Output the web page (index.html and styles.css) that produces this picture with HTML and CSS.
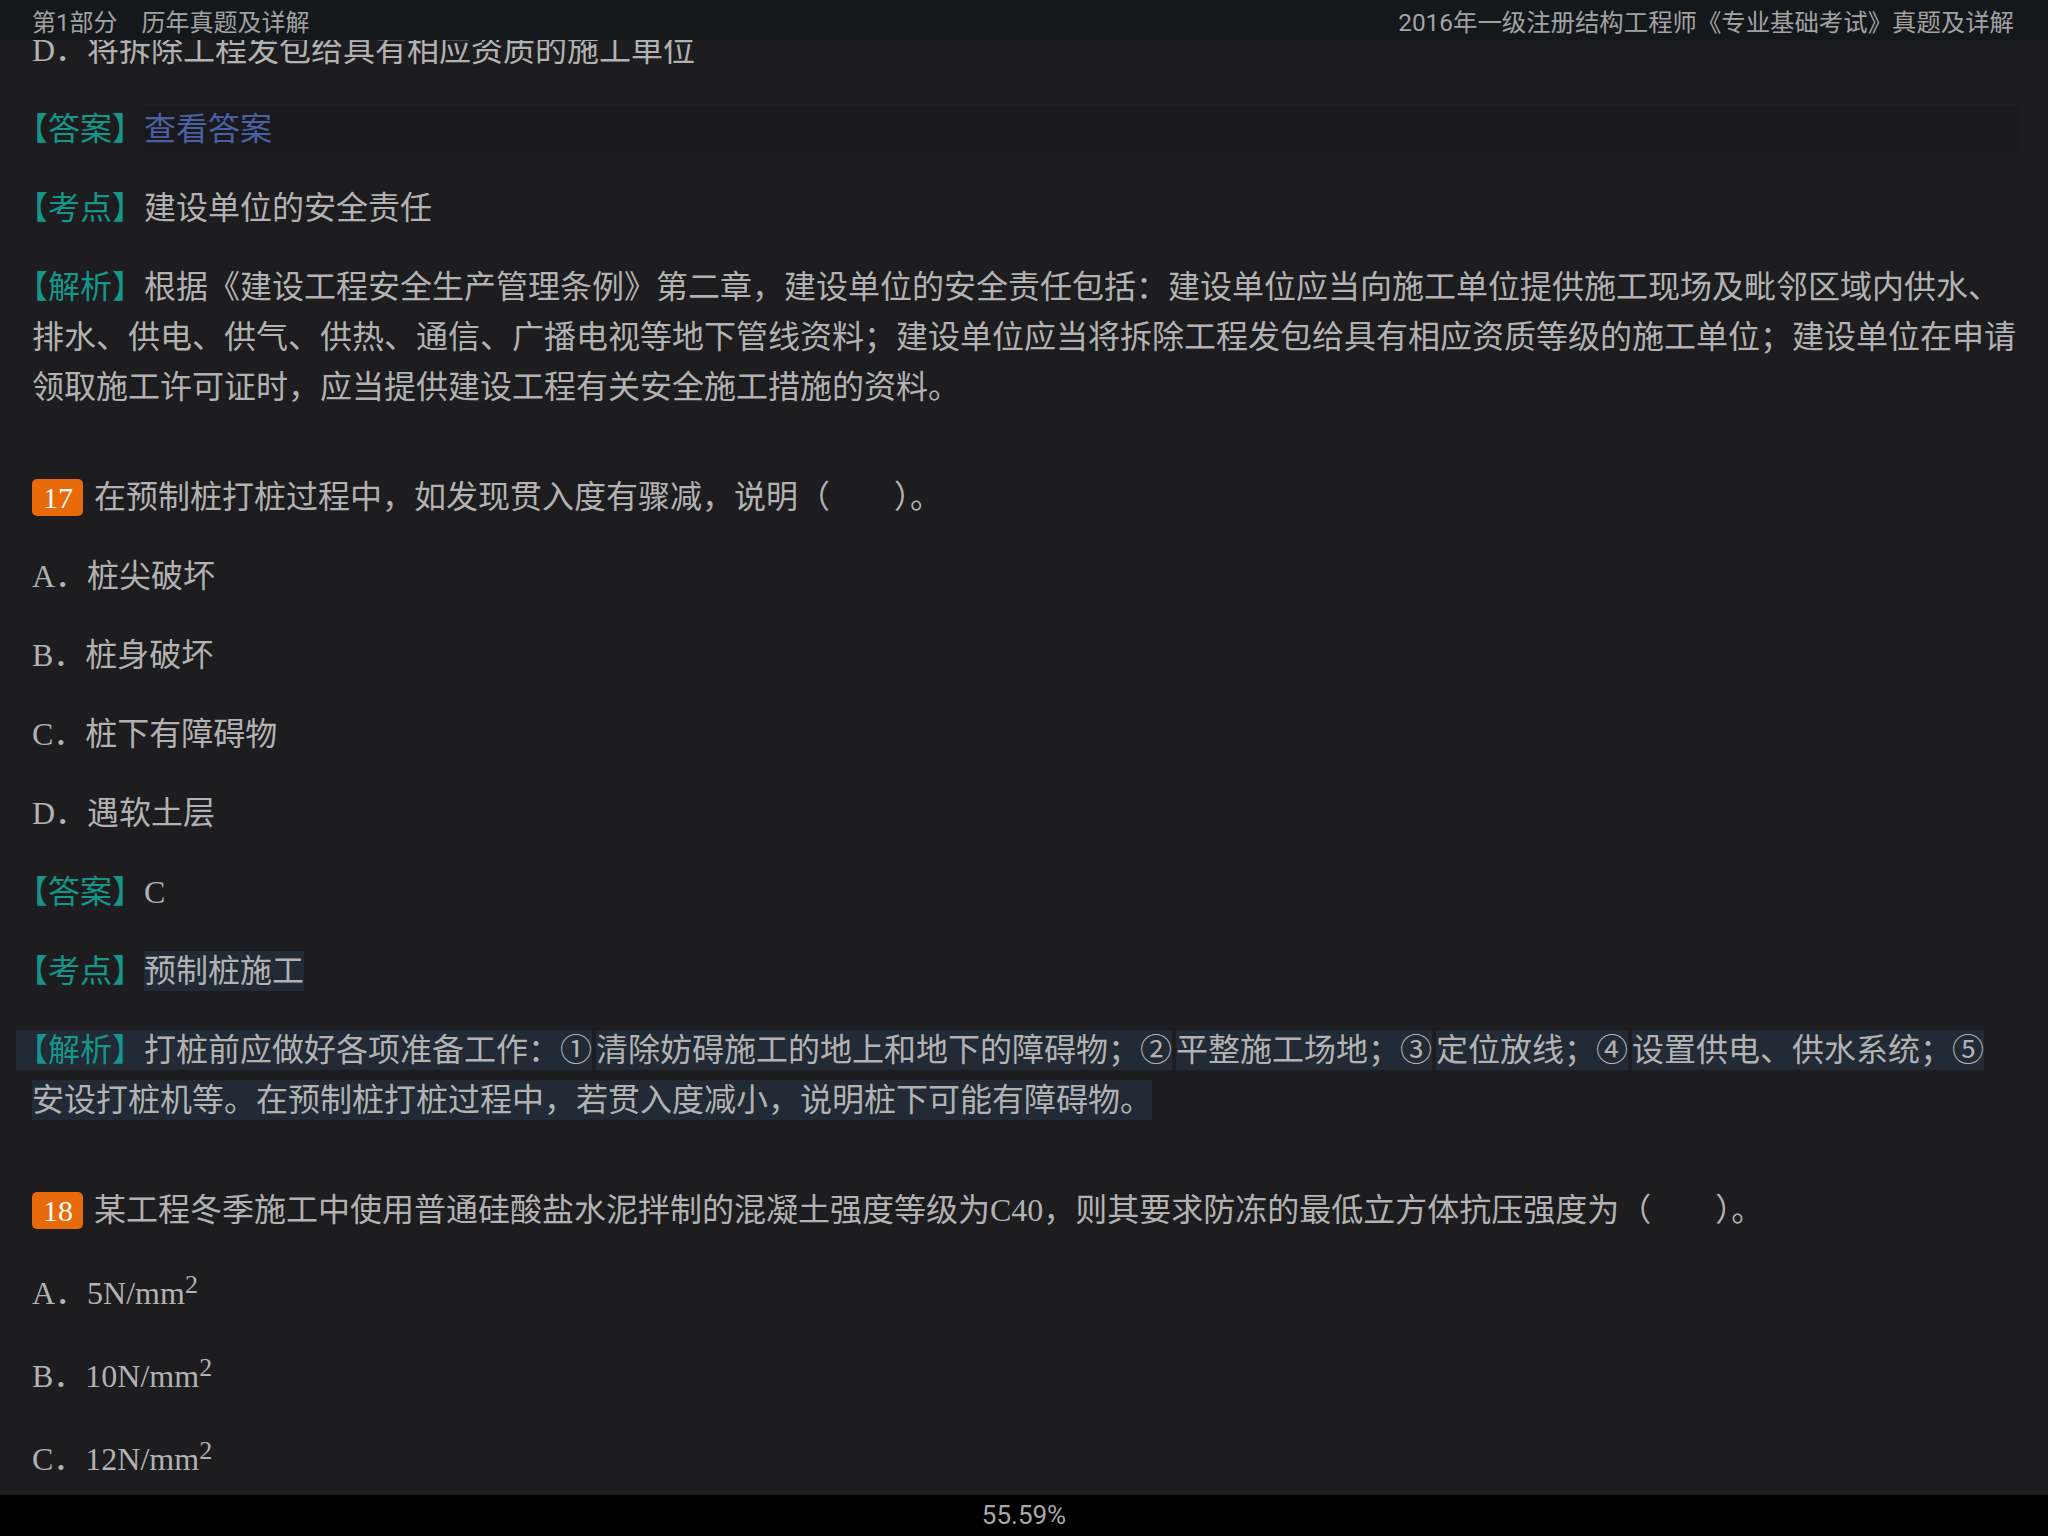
FILE: index.html
```html
<!DOCTYPE html>
<html lang="zh-CN">
<head>
    <meta charset="UTF-8">
    <meta name="viewport" content="width=device-width, initial-scale=1.0">
    <title>历年真题及详解</title>
    <link rel="stylesheet" href="styles.css">
</head>
<body>
    <header class="topbar">
        <div class="chapter">
            <span>第1部分</span>
            <span>历年真题及详解</span>
        </div>
        <div class="book">2016年一级注册结构工程师《专业基础考试》真题及详解</div>
    </header>

    <main class="page">
        <p>D．将拆除工程发包给具有相应资质的施工单位</p>
        <p class="reveal-row"><span class="tag">【答案】</span><span class="reveal"><a href="#" class="reveal-link">查看答案</a></span></p>
        <p><span class="tag">【考点】</span>建设单位的安全责任</p>
        <p><span class="tag">【解析】</span>根据《建设工程安全生产管理条例》第二章，建设单位的安全责任包括：建设单位应当向施工单位提供施工现场及毗邻区域内供水、排水、供电、供气、供热、通信、广播电视等地下管线资料；建设单位应当将拆除工程发包给具有相应资质等级的施工单位；建设单位在申请领取施工许可证时，应当提供建设工程有关安全施工措施的资料。</p>

        <p class="question"><span class="num">17</span>在预制桩打桩过程中，如发现贯入度有骤减，说明（　　）。</p>
        <p>A．桩尖破坏</p>
        <p>B．桩身破坏</p>
        <p>C．桩下有障碍物</p>
        <p>D．遇软土层</p>
        <p><span class="tag">【答案】</span>C</p>
        <p><span class="tag">【考点】</span><span class="mark">预制桩施工</span></p>
        <p><span class="mark mark-split mark-first"><span class="tag">【解析】</span>打桩前应做好各项准备工作：①</span><span class="mark mark-split">清除妨碍施工的地上和地下的障碍物；②</span><span class="mark mark-split">平整施工场地；③</span><span class="mark mark-split">定位放线；④</span><span class="mark">设置供电、供水系统；⑤</span><br><span class="mark">安设打桩机等。在预制桩打桩过程中，若贯入度减小，说明桩下可能有障碍物。</span></p>

        <p class="question"><span class="num">18</span>某工程冬季施工中使用普通硅酸盐水泥拌制的混凝土强度等级为C40，则其要求防冻的最低立方体抗压强度为（　　）。</p>
        <p class="unit">A．5N/mm<sup>2</sup></p>
        <p class="unit">B．10N/mm<sup>2</sup></p>
        <p class="unit">C．12N/mm<sup>2</sup></p>
    </main>

    <footer class="progress">55.59%</footer>
</body>
</html>
```

FILE: styles.css
```css
html, body {
    height: 100%;
}
body {
    margin: 0;
    background: #1d1d1f;
    color: #b2b2b2;
    font-family: "Liberation Serif", "Noto Sans CJK SC", serif;
    overflow: hidden;
}
.topbar {
    position: fixed;
    top: 0;
    left: 0;
    right: 0;
    height: 40px;
    padding: 0 34px 0 32px;
    display: flex;
    justify-content: space-between;
    align-items: center;
    background: #15181b;
    color: #a2a2a2;
    font-family: Roboto, "Noto Sans CJK SC", sans-serif;
    font-size: 24px;
    z-index: 2;
}
.chapter {
    display: flex;
    gap: 24px;
}
.book {
    font-size: 24.4px;
}
.page {
    padding: 25px 30px 0 32px;
}
.page p {
    margin: 0 0 29px;
    font-size: 32px;
    line-height: 50px;
}
/* opening bracket sits half-width at line start */
.tag {
    color: #14968a;
    margin-left: -16px;
}
.reveal-row {
    display: flex;
    align-items: center;
}
.reveal {
    flex: 1;
    height: 46px;
    margin-right: -2px;
    background: #1a1a1c;
    display: flex;
    align-items: center;
}
.reveal-link {
    color: #4961a4;
    text-decoration: none;
}
.page .question {
    margin-top: 60px;
}
.num {
    display: inline-block;
    height: 37px;
    line-height: 37px;
    padding: 0 10px 0 11px;
    margin-right: 11px;
    background: #e96a0b;
    color: #fff;
    font-size: 30px;
    border-radius: 5px;
}
.mark {
    background: #212a35;
    padding: 2px 0;
}
.mark-split {
    margin-right: 4px;
}
.mark-first {
    margin-left: -16px;
    padding-left: 16px;
}
.page .unit {
    margin-top: 33px;
}
sup {
    font-size: 26px;
    line-height: 0;
    vertical-align: 11px;
}
.progress {
    position: fixed;
    left: 0;
    right: 0;
    bottom: 0;
    height: 41px;
    line-height: 41px;
    background: #000;
    color: #a8a8a8;
    text-align: center;
    font-family: Roboto, "Noto Sans CJK SC", sans-serif;
    font-size: 26px;
    z-index: 2;
}
```
